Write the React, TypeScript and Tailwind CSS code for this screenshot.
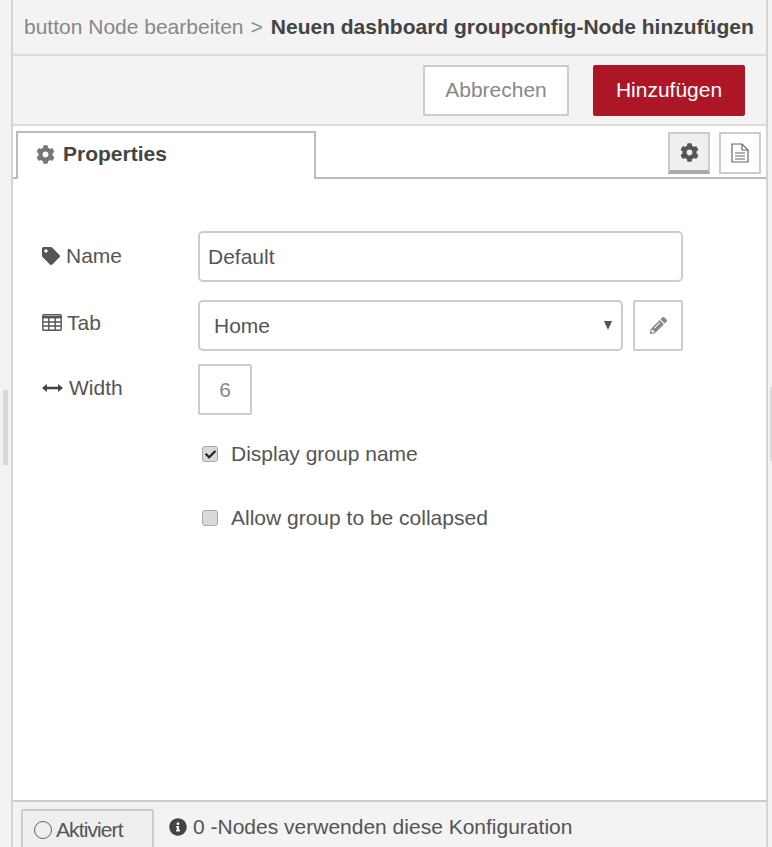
import React from 'react';
import { FaCog, FaTag, FaPencilAlt, FaInfoCircle, FaCheck } from 'react-icons/fa';

const TableIcon = () => (
  <svg width="20" height="17" viewBox="0 0 20 17" fill="none" stroke="#555" strokeWidth="1.4">
    <rect x="0.8" y="0.8" width="18.4" height="15.4" rx="1" />
    <path d="M0.8 3.2H19.2" strokeWidth="2.4" />
    <path d="M0.8 8H19.2M0.8 12H19.2M6.8 3V16M13.2 3V16" />
  </svg>
);

const ArrowsIcon = () => (
  <svg width="21" height="8" viewBox="0 0 21 8" fill="#444">
    <path d="M0 4L5 0V2.8H16V0L21 4L16 8V5.2H5V8Z" />
  </svg>
);

const FileIcon = () => (
  <svg width="18" height="20" viewBox="0 0 18 20" fill="none" stroke="#666" strokeWidth="1.2">
    <path d="M1 1H11L17 7V19H1Z" />
    <path d="M11 1V7H17" />
    <path d="M4 10H14M4 13H14M4 16H14" />
  </svg>
);

const App: React.FC = () => {
  return (
    <div className="relative flex h-[847px] w-[772px] overflow-hidden bg-[#f3f3f3] font-['Liberation_Sans',Arial,sans-serif] text-[21px] text-[#555]">
      {/* sidebar grips */}
      <div className="absolute left-[3px] top-[390px] h-[75px] w-[5px] bg-[#d8d8d8]" />
      <div className="absolute left-[770px] top-[387px] h-[74px] w-[2px] bg-[#d8d8d8]" />

      <div className="ml-[11px] flex h-full w-[757px] flex-col border-x-2 border-[#d4d4d4] bg-white">
        {/* Breadcrumb */}
        <div className="flex h-[56px] shrink-0 items-center whitespace-nowrap border-b-2 border-[#dcdcdc] bg-[#f3f3f3] pl-[11px]">
          <span className="text-[#888]">button Node bearbeiten</span>
          <span className="ml-[7px] mr-[8px] text-[#888]">&gt;</span>
          <span className="font-bold text-[#444]">Neuen dashboard groupconfig-Node hinzufügen</span>
        </div>

        {/* Actions */}
        <div className="flex h-[70px] shrink-0 items-center justify-end gap-[24px] border-b-2 border-[#dcdcdc] bg-[#f3f3f3] pr-[21px]">
          <button className="h-[51px] w-[146px] border-2 border-[#ccc] bg-white text-[#888]">Abbrechen</button>
          <button className="h-[51px] w-[152px] rounded-[2px] bg-[#ad1625] text-white">Hinzufügen</button>
        </div>

        {/* Tabs */}
        <div className="flex h-[53px] shrink-0 items-end justify-between border-b-2 border-[#bbb] pl-[3px] pr-[5px]">
          <div className="-mb-[2px] flex h-[48px] w-[300px] items-center gap-[8px] border-x-2 border-t-2 border-[#bbb] bg-white pl-[18px] pb-[4px]">
            <FaCog className="text-[19px] text-[#777]" />
            <span className="font-bold text-[#444]">Properties</span>
          </div>
          <div className="mb-[3px] flex gap-[9px]">
            <div className="flex h-[42px] w-[42px] items-center justify-center border-2 border-b-[4px] border-[#ccc] border-b-[#aaa] bg-[#efefef]">
              <FaCog className="text-[19px] text-[#555]" />
            </div>
            <div className="flex h-[42px] w-[42px] items-center justify-center border-2 border-[#ccc] bg-white">
              <FileIcon />
            </div>
          </div>
        </div>

        {/* Form */}
        <div className="flex flex-1 flex-col pl-[29px] pt-[52px]">
          <div className="flex items-start">
            <label className="flex w-[156px] items-center gap-[6px] pt-[9px]">
              <FaTag className="text-[18px]" />
              Name
            </label>
            <div className="flex h-[51px] w-[485px] items-center rounded-[5px] border-2 border-[#ccc] pl-[8px]">Default</div>
          </div>

          <div className="mt-[18px] flex items-start">
            <label className="flex w-[156px] items-center gap-[5px] pt-[7px]">
              <TableIcon />
              Tab
            </label>
            <div className="relative flex h-[51px] w-[425px] items-center rounded-[5px] border-2 border-[#ccc] pl-[14px]">
              Home
              <span className="absolute right-[9px] top-[19px] h-0 w-0 border-x-[4.5px] border-t-[9px] border-x-transparent border-t-[#555]" />
            </div>
            <div className="ml-[10px] flex h-[51px] w-[50px] items-center justify-center rounded-[2px] border-2 border-[#ccc]">
              <FaPencilAlt className="text-[17px] text-[#888]" />
            </div>
          </div>

          <div className="mt-[13px] flex items-start">
            <label className="flex w-[156px] items-center gap-[6px] pt-[8px]">
              <ArrowsIcon />
              Width
            </label>
            <div className="flex h-[51px] w-[54px] items-center justify-center rounded-[2px] border-2 border-[#ccc] text-[#888]">6</div>
          </div>

          <div className="ml-[160px] mt-[26px] flex h-[26px] items-center">
            <span className="flex h-[16px] w-[16px] items-center justify-center rounded-[3px] border border-[#aaa] bg-[#d9d9d9]">
              <FaCheck className="text-[11px] text-[#222]" />
            </span>
            <span className="ml-[13px]">Display group name</span>
          </div>

          <div className="ml-[160px] mt-[38px] flex h-[26px] items-center">
            <span className="h-[16px] w-[16px] rounded-[3px] border border-[#aaa] bg-[#d9d9d9]" />
            <span className="ml-[13px]">Allow group to be collapsed</span>
          </div>
        </div>

        {/* Footer */}
        <div className="flex h-[47px] shrink-0 items-start border-t-2 border-[#ccc] bg-[#f3f3f3] pl-[8px] pt-[7px]">
          <div className="flex h-[40px] w-[133px] items-center rounded-[2px] border-2 border-[#ccc] bg-[#efefef] pl-[11px] pt-[2px] tracking-[-0.9px]">
            <span className="mr-[4px] h-[18px] w-[18px] rounded-full border border-[#666]" />
            Aktiviert
          </div>
          <div className="ml-[15px] flex items-center gap-[6px] pt-[2px]">
            <FaInfoCircle className="text-[18px] text-[#444]" />
            0 -Nodes verwenden diese Konfiguration
          </div>
        </div>
      </div>
    </div>
  );
};

export default App;
